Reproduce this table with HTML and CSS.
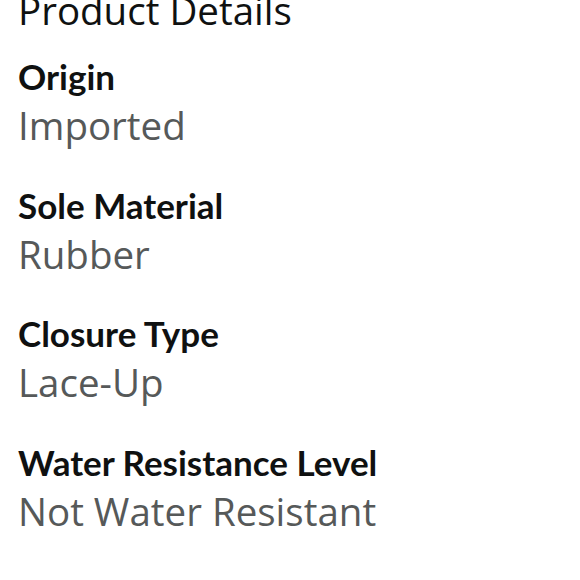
FILE: index.html
```html
<!DOCTYPE html>
<html>
<head>
<meta charset="utf-8">
<link rel="stylesheet" href="styles.css">
</head>
<body>
<div class="details">
  <h2 class="title">Product Details</h2>
  <div class="list">
    <div class="item"><div class="label">Origin</div><div class="value">Imported</div></div>
    <div class="item"><div class="label">Sole Material</div><div class="value">Rubber</div></div>
    <div class="item"><div class="label">Closure Type</div><div class="value">Lace-Up</div></div>
    <div class="item"><div class="label">Water Resistance Level</div><div class="value">Not Water Resistant</div></div>
    <div class="item item-last"><div class="label">Country of Origin</div><div class="value">China</div></div>
  </div>
</div>
</body>
</html>
```
FILE: styles.css
```css
html, body {
  margin: 0;
  padding: 0;
  background: #ffffff;
  overflow: hidden;
}
.details {
  padding-left: 18px;
  font-family: "Open Sans", "Noto Sans", sans-serif;
}
.title {
  margin: -12px 0 0 0;
  font-size: 38.5px;
  line-height: 44px;
  font-weight: 400;
  color: #0f1111;
}
.list {
  display: flex;
  flex-direction: column;
  gap: 34.6px;
  margin-top: 24px;
}
.item {
  display: flex;
  flex-direction: column;
  gap: 3px;
}
.item-last {
  margin-top: 2px;
}
.label {
  font-family: "Lato", "Open Sans", sans-serif;
  font-size: 35px;
  line-height: 41px;
  font-weight: 700;
  color: #0f1111;
}
.value {
  font-size: 38.5px;
  line-height: 50px;
  font-weight: 400;
  color: #565959;
}
```
